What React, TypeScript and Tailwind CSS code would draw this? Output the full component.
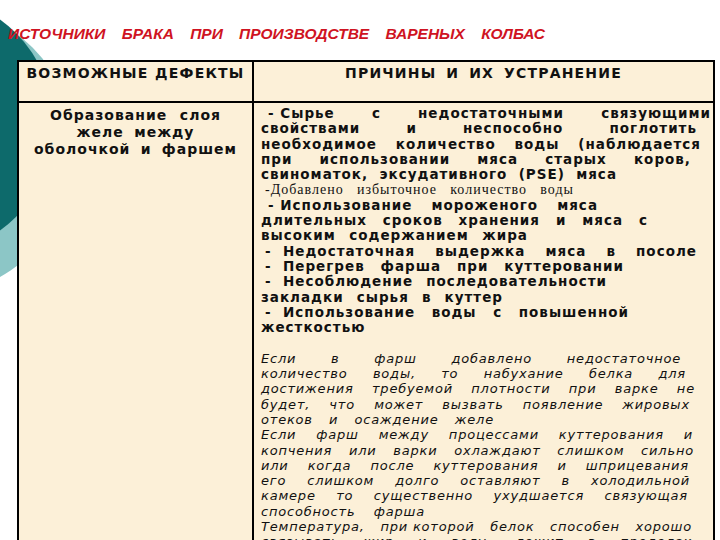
import React from 'react'

type Row = { kind: 'b' | 's' | 'i' | 'gap'; words?: string[]; cls?: string }

const rows: Row[] = [
  { kind: 'b', words: ['- Сырье', 'с', 'недостаточными', 'связующими'], cls: 'ml-[7px] w-[443px]' },
  { kind: 'b', words: ['свойствами', 'и', 'неспособно', 'поглотить'], cls: 'w-[436px]' },
  { kind: 'b', words: ['необходимое', 'количество', 'воды', '(наблюдается'], cls: 'w-[440px]' },
  { kind: 'b', words: ['при', 'использовании', 'мяса', 'старых', 'коров,'], cls: 'w-[430px]' },
  { kind: 'b', words: ['свиноматок,', 'эксудативного', '(PSE)', 'мяса'], cls: 'w-[356px]' },
  { kind: 's', words: ['-Добавлено', 'избыточное', 'количество', 'воды'], cls: 'ml-[4px] w-[309px]' },
  { kind: 'b', words: ['- Использование', 'мороженого', 'мяса'], cls: 'ml-[7px] w-[330px]' },
  { kind: 'b', words: ['длительных', 'сроков', 'хранения', 'и', 'мяса', 'с'], cls: 'w-[387px]' },
  { kind: 'b', words: ['высоким', 'содержанием', 'жира'], cls: 'w-[267px]' },
  { kind: 'b', words: ['-  Недостаточная', 'выдержка', 'мяса', 'в', 'посоле'], cls: 'ml-[4px] w-[432px]' },
  { kind: 'b', words: ['-  Перегрев', 'фарша', 'при', 'куттеровании'], cls: 'ml-[4px] w-[359px]' },
  { kind: 'b', words: ['-  Несоблюдение', 'последовательности'], cls: 'ml-[4px] w-[342px]' },
  { kind: 'b', words: ['закладки', 'сырья', 'в', 'куттер'], cls: 'w-[242px]' },
  { kind: 'b', words: ['-  Использование', 'воды', 'с', 'повышенной'], cls: 'ml-[4px] w-[364px]' },
  { kind: 'b', words: ['жесткостью'], cls: 'w-[110px]' },
  { kind: 'gap' },
  { kind: 'i', words: ['Если', 'в', 'фарш', 'добавлено', 'недостаточное'], cls: 'w-[420px]' },
  { kind: 'i', words: ['количество', 'воды,', 'то', 'набухание', 'белка', 'для'], cls: 'w-[425px]' },
  { kind: 'i', words: ['достижения', 'требуемой', 'плотности', 'при', 'варке', 'не'], cls: 'w-[434px]' },
  { kind: 'i', words: ['будет,', 'что', 'может', 'вызвать', 'появление', 'жировых'], cls: 'w-[429px]' },
  { kind: 'i', words: ['отеков', 'и', 'осаждение', 'желе'], cls: 'w-[233px]' },
  { kind: 'i', words: ['Если', 'фарш', 'между', 'процессами', 'куттерования', 'и'], cls: 'w-[432px]' },
  { kind: 'i', words: ['копчения', 'или', 'варки', 'охлаждают', 'слишком', 'сильно'], cls: 'w-[433px]' },
  { kind: 'i', words: ['или', 'когда', 'после', 'куттерования', 'и', 'шприцевания'], cls: 'w-[428px]' },
  { kind: 'i', words: ['его', 'слишком', 'долго', 'оставляют', 'в', 'холодильной'], cls: 'w-[429px]' },
  { kind: 'i', words: ['камере', 'то', 'существенно', 'ухудшается', 'связующая'], cls: 'w-[427px]' },
  { kind: 'i', words: ['способность', 'фарша'], cls: 'w-[164px]' },
  { kind: 'i', words: ['Температура,', 'при которой', 'белок', 'способен', 'хорошо'], cls: 'w-[431px]' },
  { kind: 'i', words: ['связывать', 'жир', 'и', 'воду,', 'лежит', 'в', 'пределах'], cls: 'w-[431px]' },
]

const kindCls = {
  b: 'font-bold text-[13.5px] tracking-[1px]',
  s: 'font-[family-name:"Liberation_Serif",serif] text-[14px] tracking-[1px]',
  i: 'italic text-[13px] tracking-[0.8px]',
  gap: '',
}

function Line({ words, className }: { words: string[]; className: string }) {
  return (
    <div className={`flex justify-between whitespace-pre ${className}`}>
      {words.map((w, i) => (
        <span key={i}>{w}</span>
      ))}
    </div>
  )
}

export default function App() {
  return (
    <div className="relative h-[540px] w-[720px] overflow-hidden bg-white font-[family-name:'DejaVu_Sans',sans-serif] text-[#111]">
      {/* decorative circles behind the table */}
      <svg className="absolute left-0 top-0" width="120" height="300" viewBox="0 0 120 300">
        <circle cx="-70" cy="150" r="145" fill="#8cc6c6" />
        <circle cx="-76" cy="125" r="130" fill="#0d6a6b" />
      </svg>

      {/* Title */}
      <div className="relative pl-[8px] pt-[25px]">
        <Line
          words={['ИСТОЧНИКИ', 'БРАКА', 'ПРИ', 'ПРОИЗВОДСТВЕ', 'ВАРЕНЫХ', 'КОЛБАС']}
          className="w-[537px] font-[family-name:'Liberation_Sans',sans-serif] text-[15.5px] leading-[17px] font-bold italic text-[#cf1322]"
        />
      </div>

      {/* Table */}
      <div className="relative ml-[17px] mt-[18px] w-[698px] border-2 border-black bg-[#fcf0d8]">
        <div className="grid h-[41px] grid-cols-[235px_1fr] border-b-2 border-black text-[14px] font-bold leading-[17px] tracking-[1.2px]">
          <div className="border-r-2 border-black pt-[3px]">
            <Line words={['ВОЗМОЖНЫЕ', 'ДЕФЕКТЫ']} className="mx-auto w-[218px]" />
          </div>
          <div className="pt-[3px]">
            <Line words={['ПРИЧИНЫ', 'И', 'ИХ', 'УСТРАНЕНИЕ']} className="mx-auto w-[277px]" />
          </div>
        </div>

        <div className="grid grid-cols-[235px_1fr]">
          <div className="border-r-2 border-black pt-[4px] text-[14px] font-bold leading-[17px] tracking-[1px]">
            <Line words={['Образование', 'слоя']} className="mx-auto w-[171px]" />
            <Line words={['желе', 'между']} className="mx-auto w-[118px]" />
            <Line words={['оболочкой', 'и', 'фаршем']} className="mx-auto w-[203px]" />
          </div>
          <div className="pl-[7px] pt-[3px] leading-[15.3px]">
            {rows.map((r, i) =>
              r.kind === 'gap' ? (
                <div key={i} className="h-[15.3px]" />
              ) : (
                <Line key={i} words={r.words!} className={`${kindCls[r.kind]} ${r.cls}`} />
              ),
            )}
          </div>
        </div>
      </div>
    </div>
  )
}
